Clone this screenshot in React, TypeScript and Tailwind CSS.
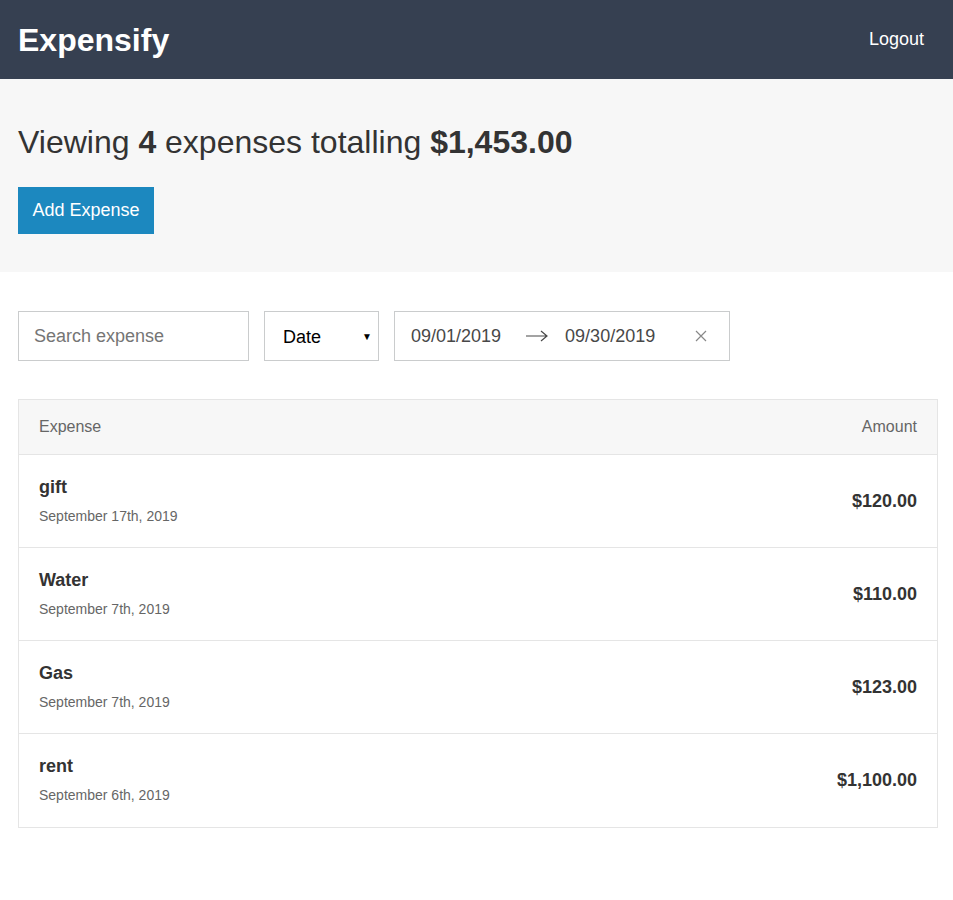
import React from 'react'

const expenses = [
  { description: 'gift', date: 'September 17th, 2019', amount: '$120.00' },
  { description: 'Water', date: 'September 7th, 2019', amount: '$110.00' },
  { description: 'Gas', date: 'September 7th, 2019', amount: '$123.00' },
  { description: 'rent', date: 'September 6th, 2019', amount: '$1,100.00' },
]

export default function App() {
  return (
    <div className="min-h-[900px] bg-white text-[#333] font-['Liberation_Sans',Arial,sans-serif]">
      <header className="h-[79px] bg-[#364051] flex items-center justify-between pl-[18px] pr-[29px]">
        <h1 className="text-[32px] font-bold text-white leading-none">Expensify</h1>
        <button className="text-[18px] text-white">Logout</button>
      </header>

      <section className="bg-[#f7f7f7] h-[193px] pl-[18px] pr-[15px] pt-[43px]">
        <h2 className="text-[32px] leading-[40px] font-light">
          Viewing <span className="font-bold">4</span> expenses totalling{' '}
          <span className="font-bold">$1,453.00</span>
        </h2>
        <button className="mt-[25px] h-[47px] w-[136px] bg-[#1c88bf] text-white text-[18px]">
          Add Expense
        </button>
      </section>

      <div className="pl-[18px] pr-[15px] pt-[39px]">
        <div className="flex gap-[15px] h-[50px]">
          <div className="w-[231px] border border-[#cacccd] flex items-center px-[15px] text-[18px] text-[#757575]">
            Search expense
          </div>
          <div className="w-[115px] border border-[#cacccd] flex items-center justify-between pl-[18px] pr-[6px] text-[18px] text-black">
            <span className="mt-[2px]">Date</span>
            <span className="text-[10px]">▼</span>
          </div>
          <div className="w-[336px] border border-[#cacccd] flex items-center pl-[16px] text-[18px] text-[#484848]">
            <span>09/01/2019</span>
            <svg className="ml-[24px]" width="24" height="24" viewBox="0 0 24 24" fill="none" stroke="#484848" strokeWidth="1.2">
              <path d="M1 12h21M16 7l6 5-6 5" />
            </svg>
            <span className="ml-[16px]">09/30/2019</span>
            <svg className="ml-[40px]" width="12" height="12" viewBox="0 0 12 12" stroke="#888" strokeWidth="1.2">
              <path d="M1 1l10 10M11 1L1 11" />
            </svg>
          </div>
        </div>

        <div className="mt-[38px] border border-[#e5e5e5]">
          <div className="h-[55px] bg-[#f7f7f7] border-b border-[#e5e5e5] flex items-center justify-between px-[20px] text-[16px] text-[#666]">
            <span>Expense</span>
            <span>Amount</span>
          </div>
          {expenses.map((e, i) => (
            <div
              key={e.description}
              className={`h-[93px] flex items-center justify-between px-[20px] ${i < expenses.length - 1 ? 'border-b border-[#e5e5e5]' : ''}`}
            >
              <div>
                <div className="text-[18px] font-bold text-[#333] leading-[22px]">{e.description}</div>
                <div className="mt-[8px] text-[14px] text-[#666]">{e.date}</div>
              </div>
              <div className="text-[18px] font-bold text-[#333]">{e.amount}</div>
            </div>
          ))}
        </div>
      </div>
    </div>
  )
}
